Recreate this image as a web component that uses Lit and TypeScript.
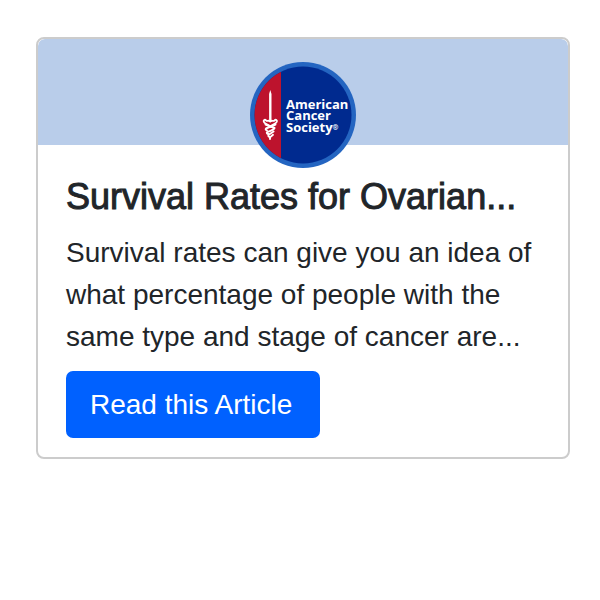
import { LitElement, html, css, svg } from "lit";
import { customElement, property } from "lit/decorators.js";

@customElement("society-logo")
class SocietyLogo extends LitElement {
  static styles = css`
    :host {
      display: block;
      width: 106px;
      height: 106px;
    }
    .logo {
      display: block;
      width: 100%;
      height: 100%;
    }
    .name {
      font: 700 13px "Open Sans", "Noto Sans", sans-serif;
      fill: #fff;
    }
    .mark {
      font-size: 7px;
    }
  `;

  render() {
    return html`
      <svg class="logo" viewBox="0 0 106 106" role="img" aria-label="American Cancer Society">
        ${svg`
          <defs><clipPath id="disc"><circle cx="53" cy="53" r="48.5" /></clipPath></defs>
          <circle cx="53" cy="53" r="53" fill="#2465c1" />
          <g clip-path="url(#disc)">
            <rect width="106" height="106" fill="#002a8f" />
            <rect width="31" height="106" fill="#bd132d" />
          </g>
          <path d="M20.3 28 L21.5 32 V60 H19.1 V32 Z" fill="#fff" />
          <g fill="none" stroke="#fff" stroke-width="1.9" stroke-linecap="round" stroke-linejoin="round">
            <path d="M20.3 59.5 C18.5 57.5 17.5 60 16 58.3 C14.8 57 13.3 58.2 13.8 59.8 C14.5 62 18 62.3 20.3 64.8 C22.6 62.3 26 62 26.8 59.8 C27.3 58.2 25.8 57 24.6 58.3 C23 60 22 57.5 20.3 59.5" />
            <path d="M25.5 62.5 L16 66.5 Q15 67.8 17 68.4" />
            <path d="M15.5 62.5 L24.6 66 Q25.2 67.2 16.8 70.3 Q16.6 71.8 18.5 72" />
            <path d="M23.6 69.5 L18.3 73 Q18 74.5 19.5 75" />
            <path d="M23 72.8 L20 75.4 V77" />
          </g>
          <text class="name" x="36" y="47">American</text>
          <text class="name" x="36" y="58">Cancer</text>
          <text class="name" x="36" y="70">Society<tspan class="mark" dy="-2">®</tspan></text>
        `}
      </svg>
    `;
  }
}

@customElement("article-card")
class ArticleCard extends LitElement {
  @property() heading = "";
  @property() summary = "";

  static styles = css`
    :host {
      display: block;
    }
    .card {
      border: 2px solid #ccc;
      border-radius: 8px;
      background: #fff;
      overflow: hidden;
    }
    .banner {
      display: flex;
      justify-content: center;
      height: 106px;
      padding-top: 23px;
      box-sizing: border-box;
      background: #b9cdea;
      border-radius: 7px 7px 0 0;
    }
    .body {
      padding: 29px 28px 19px;
      color: #212529;
    }
    .heading {
      margin: 0 0 12px;
      font-size: 36px;
      font-weight: 400;
      line-height: 46px;
      -webkit-text-stroke: 1px #212529;
    }
    .summary {
      margin: 0 0 13px;
      font-size: 28px;
      line-height: 42px;
    }
    .action {
      display: block;
      margin: 0;
      padding: 13px 28px 12px 24px;
      border: 0;
      border-radius: 7px;
      background: #0061ff;
      color: #fff;
      font: inherit;
      font-size: 28px;
      line-height: 42px;
      cursor: pointer;
    }
  `;

  render() {
    return html`
      <article class="card">
        <div class="banner"><society-logo></society-logo></div>
        <div class="body">
          <h2 class="heading">${this.heading}</h2>
          <p class="summary">${this.summary}</p>
          <button class="action" type="button">Read this Article</button>
        </div>
      </article>
    `;
  }
}

@customElement("app-root")
class AppRoot extends LitElement {
  static styles = css`
    :host {
      display: block;
      min-height: 100vh;
      box-sizing: border-box;
      padding: 37px 30px 37px 36px;
      background: #fff;
      font-family: "Liberation Sans", Arial, sans-serif;
    }
  `;

  render() {
    return html`
      <main>
        <article-card
          heading="Survival Rates for Ovarian..."
          summary="Survival rates can give you an idea of what percentage of people with the same type and stage of cancer are..."
        ></article-card>
      </main>
    `;
  }
}
